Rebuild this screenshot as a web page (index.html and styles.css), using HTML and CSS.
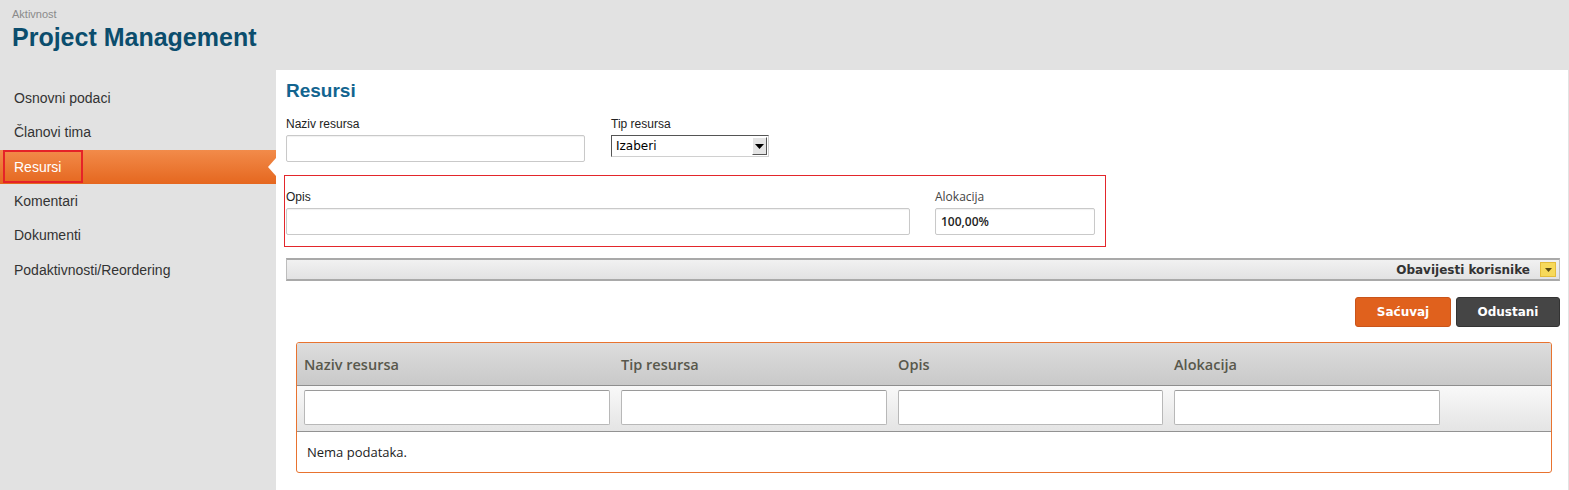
FILE: index.html
```html
<!DOCTYPE html>
<html lang="hr">
<head>
<meta charset="utf-8">
<title>Project Management - Resursi</title>
<link rel="stylesheet" href="styles.css">
</head>
<body>
<header class="top">
  <div class="crumb">Aktivnost</div>
  <h1 class="title">Project Management</h1>
</header>
<div class="main">
  <aside class="sidebar">
    <ul class="nav">
      <li class="nav-item">Osnovni podaci</li>
      <li class="nav-item">Članovi tima</li>
      <li class="nav-item active"><span class="focus">Resursi</span></li>
      <li class="nav-item">Komentari</li>
      <li class="nav-item">Dokumenti</li>
      <li class="nav-item">Podaktivnosti/Reordering</li>
    </ul>
  </aside>
  <section class="content">
    <h2 class="heading">Resursi</h2>
    <div class="row row-first">
      <div class="field f-naziv">
        <label class="lbl">Naziv resursa</label>
        <div class="input"></div>
      </div>
      <div class="field f-tip">
        <label class="lbl">Tip resursa</label>
        <div class="select"><span class="select-text">Izaberi</span><span class="select-btn"><svg width="9" height="5" viewBox="0 0 9 5"><path d="M0 0h9L4.5 5z" fill="#000"/></svg></span></div>
      </div>
    </div>
    <div class="row row-box">
      <div class="field f-opis">
        <label class="lbl">Opis</label>
        <div class="input"></div>
      </div>
      <div class="field f-alok">
        <label class="lbl lbl-alt">Alokacija</label>
        <div class="input input-val">100,00%</div>
      </div>
    </div>
    <div class="notify">
      <span class="notify-text">Obavijesti korisnike</span>
      <span class="notify-btn"><svg width="7" height="4" viewBox="0 0 7 4"><path d="M0 0h7L3.5 4z" fill="#5a4a10"/></svg></span>
    </div>
    <div class="actions">
      <button class="btn btn-save">Saćuvaj</button>
      <button class="btn btn-cancel">Odustani</button>
    </div>
    <div class="grid">
      <div class="grid-head cols">
        <div>Naziv resursa</div>
        <div>Tip resursa</div>
        <div>Opis</div>
        <div>Alokacija</div>
      </div>
      <div class="grid-filter cols">
        <div class="finput"></div>
        <div class="finput"></div>
        <div class="finput"></div>
        <div class="finput"></div>
      </div>
      <div class="grid-empty">Nema podataka.</div>
    </div>
  </section>
</div>
</body>
</html>
```
FILE: styles.css
```css
html, body {
  margin: 0;
  padding: 0;
}
body {
  background: #e2e2e2;
  font-family: "Liberation Sans", Arial, sans-serif;
  color: #333;
  width: 1569px;
  height: 490px;
  overflow: hidden;
}
.top {
  height: 70px;
  box-sizing: border-box;
  padding: 8px 0 0 12px;
}
.crumb {
  font-size: 11px;
  line-height: 13px;
  color: #8a8a8a;
}
.title {
  margin: 1px 0 0 0;
  font-size: 25px;
  line-height: 30px;
  font-weight: bold;
  color: #0b4d6d;
}
.main {
  display: flex;
  height: 420px;
}
.sidebar {
  width: 276px;
  flex: none;
}
.nav {
  list-style: none;
  margin: 0;
  padding: 11px 0 0 0;
}
.nav-item {
  height: 34.4px;
  line-height: 34px;
  padding-left: 14px;
  font-size: 14px;
  color: #333;
}
.nav-item.active {
  position: relative;
  padding-left: 3px;
  background: linear-gradient(#f28b4a, #e5671f);
  color: #fff;
  height: 34px;
}
.nav-item.active::after {
  content: "";
  position: absolute;
  right: 0;
  top: 8px;
  border-style: solid;
  border-width: 9px 8px 9px 0;
  border-color: transparent #fff transparent transparent;
}
.focus {
  display: block;
  width: 80px;
  height: 33px;
  box-sizing: border-box;
  border: 2px solid #e52228;
  padding-left: 9px;
  line-height: 30px;
}
.content {
  flex: 1;
  background: #fff;
  margin-right: 1px;
  padding: 10px 8px 0 10px;
  box-sizing: border-box;
}
.heading {
  margin: 0;
  font-size: 19px;
  line-height: 22px;
  font-weight: bold;
  color: #12648f;
}
.row {
  display: flex;
}
.row-first {
  margin-top: 15px;
  gap: 26px;
}
.lbl {
  display: block;
  font-size: 12px;
  line-height: 14px;
  color: #222;
  margin-bottom: 4px;
}
.lbl-alt {
  font-family: "Open Sans", sans-serif;
  color: #444;
}
.input {
  height: 27px;
  box-sizing: border-box;
  border: 1px solid #c9c9c9;
  border-radius: 2px;
  background: #fff;
  box-shadow: inset 0 1px 1px rgba(0,0,0,0.06);
}
.f-naziv { width: 299px; }
.f-tip { width: 158px; }
.select {
  margin-top: 1px;
  height: 22px;
  box-sizing: border-box;
  border: 1px solid #7a7a7a;
  border-top-color: #555;
  border-left-color: #555;
  border-right-color: #d0d0d0;
  border-bottom-color: #d0d0d0;
  display: flex;
  align-items: center;
  background: #fff;
}
.select-text {
  flex: 1;
  font-family: "DejaVu Sans", sans-serif;
  font-size: 12px;
  padding-left: 4px;
  color: #000;
}
.select-btn {
  width: 15px;
  height: 18px;
  box-sizing: border-box;
  background: #e4e4e4;
  border: 1px solid #fff;
  border-right-color: #555;
  border-bottom-color: #555;
  display: flex;
  align-items: center;
  justify-content: center;
  margin-right: 1px;
}
.row-box {
  margin: 13px 0 0 -2px;
  width: 822px;
  height: 72px;
  box-sizing: border-box;
  border: 1px solid #e3262b;
  padding: 14px 0 0 1px;
  gap: 25px;
}
.f-opis { width: 624px; }
.f-alok { width: 160px; }
.input-val {
  font-family: "Open Sans", sans-serif;
  font-size: 12px;
  font-weight: 600;
  color: #222;
  line-height: 25px;
  padding-left: 5px;
}
.notify {
  margin-top: 11px;
  height: 23px;
  box-sizing: border-box;
  border-top: 2px solid #a9a9a9;
  border-bottom: 2px solid #a9a9a9;
  border-left: 1px solid #bdbdbd;
  border-right: 1px solid #bdbdbd;
  background: linear-gradient(#f1f1f1, #e2e2e3);
  display: flex;
  align-items: center;
  justify-content: flex-end;
  padding-right: 3px;
}
.notify-text {
  font-family: "DejaVu Sans", Verdana, sans-serif;
  font-weight: bold;
  font-size: 12px;
  color: #333;
  margin-right: 10px;
}
.notify-btn {
  width: 16px;
  height: 15px;
  box-sizing: border-box;
  background: #f7d95a;
  border: 1px solid #e4bc3a;
  display: flex;
  align-items: center;
  justify-content: center;
}
.actions {
  margin-top: 16px;
  display: flex;
  justify-content: flex-end;
  gap: 5px;
}
.btn {
  height: 30px;
  border: none;
  border-radius: 3px;
  font-family: "DejaVu Sans", Verdana, sans-serif;
  font-weight: bold;
  font-size: 12px;
  color: #fff;
  padding: 0;
}
.btn-save {
  width: 96px;
  background: #e0611d;
  border: 1px solid #c9541a;
}
.btn-cancel {
  width: 104px;
  background: #454545;
  border: 1px solid #333;
}
.grid {
  margin: 15px 8px 0 10px;
  border: 1px solid #e8732f;
  border-radius: 3px;
  overflow: hidden;
}
.cols {
  display: grid;
  grid-template-columns: 306px 266px 265px 266px;
  column-gap: 11px;
  padding-left: 7px;
}
.grid-head {
  height: 43px;
  box-sizing: border-box;
  background: linear-gradient(#dddddd, #c9c9c9);
  border-bottom: 1px solid #8e8e8e;
  font-family: "Open Sans", sans-serif;
  font-weight: 600;
  font-size: 14.5px;
  color: #58584c;
  align-items: center;
}
.grid-filter {
  height: 46px;
  box-sizing: border-box;
  background: linear-gradient(#f9f9f9, #e4e4e4);
  border-bottom: 1px solid #929292;
  padding-top: 4px;
}
.finput {
  height: 35px;
  box-sizing: border-box;
  background: #fff;
  border: 1px solid #b8b8b8;
  border-top-color: #9a9a9a;
  border-radius: 2px;
}
.grid-empty {
  height: 40px;
  line-height: 40px;
  padding-left: 10px;
  font-family: "Open Sans", sans-serif;
  font-size: 13px;
  color: #222;
}
```
